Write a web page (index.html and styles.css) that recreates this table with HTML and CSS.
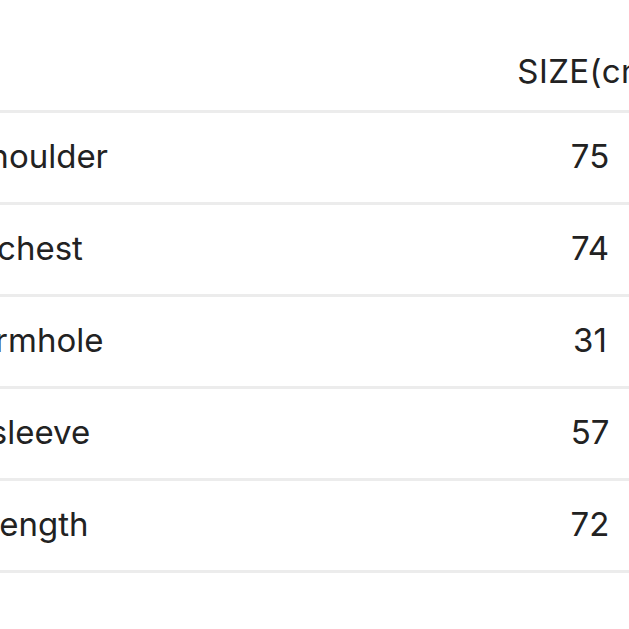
FILE: index.html
```html
<!DOCTYPE html>
<html>
<head>
<meta charset="utf-8">
<link rel="stylesheet" href="styles.css">
</head>
<body>
<div class="table">
  <div class="row head"><div class="cell"></div><div class="cell">SIZE(cm)</div></div>
  <div class="row"><div class="cell">shoulder</div><div class="cell">75</div></div>
  <div class="row"><div class="cell">chest</div><div class="cell">74</div></div>
  <div class="row"><div class="cell">armhole</div><div class="cell">31</div></div>
  <div class="row"><div class="cell">sleeve</div><div class="cell">57</div></div>
  <div class="row"><div class="cell">length</div><div class="cell">72</div></div>
</div>
</body>
</html>
```
FILE: styles.css
```css
html, body { margin: 0; padding: 0; background: #fff; }
body { width: 629px; height: 629px; overflow: hidden; }
.table {
  width: 750px;
  margin-left: -60px;
  font-family: "Inter", "Noto Sans", sans-serif;
  font-size: 33px;
  font-weight: 400;
  color: #222;
}
.row {
  display: flex;
  justify-content: space-between;
  align-items: center;
  height: 92px;
  box-sizing: border-box;
  padding-bottom: 4px;
  border-bottom: 3px solid #ececec;
}
.row.head {
  height: 113px;
  align-items: flex-start;
  padding-top: 51px;
  padding-bottom: 0;
}
.head .cell { letter-spacing: 0.4px; }
.cell {
  width: 200px;
  text-align: center;
  white-space: nowrap;
  line-height: 40px;
}
```
